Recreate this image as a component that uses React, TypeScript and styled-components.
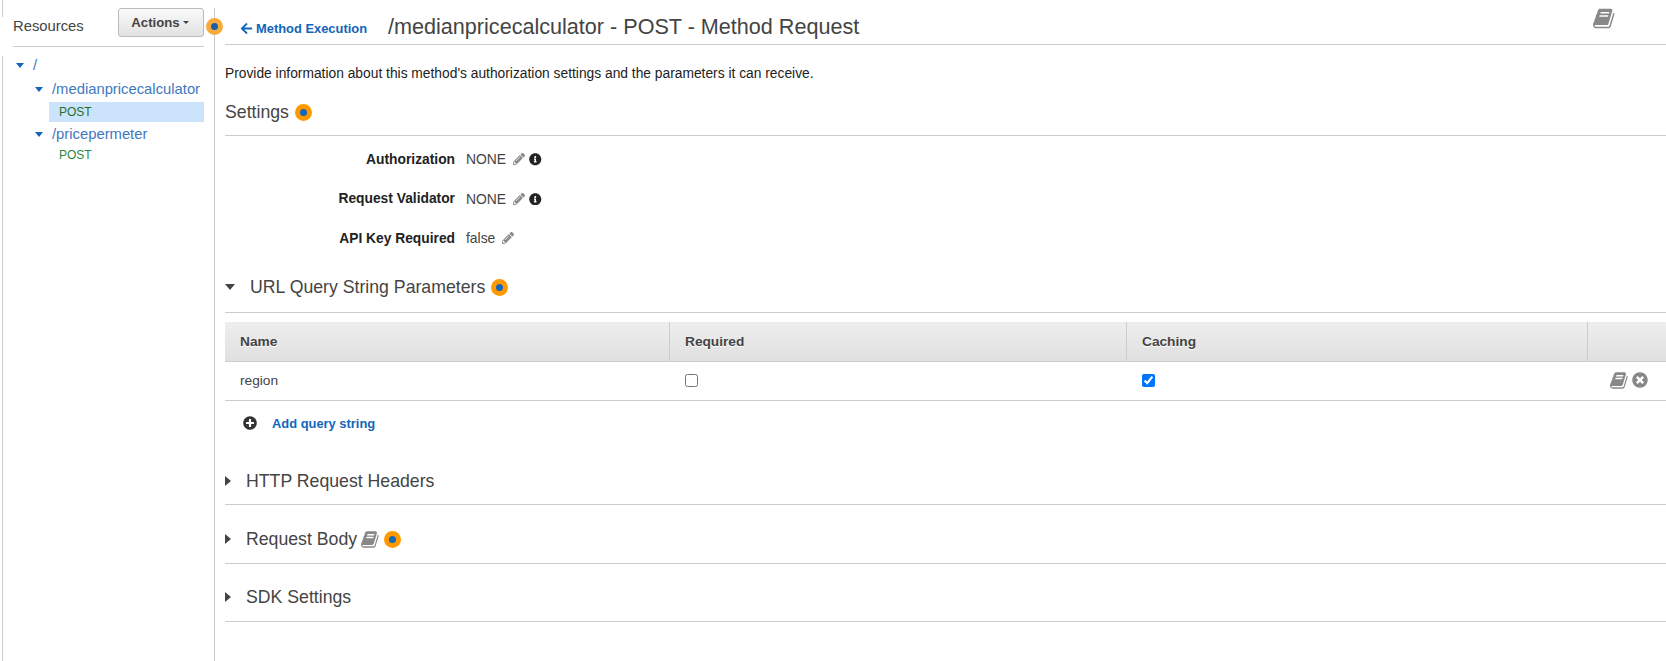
import { FC, Fragment } from 'react'
import styled, { createGlobalStyle } from 'styled-components'
import { FaArrowLeft, FaInfoCircle, FaPencilAlt, FaPlusCircle, FaTimesCircle } from 'react-icons/fa'

const GlobalStyle = createGlobalStyle`
	html, body {
		margin: 0;
		padding: 0;
		background: #fff;
		font-family: "Liberation Sans", Arial, sans-serif;
		color: #333;
	}
`

const Page = styled.div`
	display: flex;
	width: 1666px;
	height: 661px;
	overflow: hidden;
	position: relative;
`

const Rail = styled.div`
	width: 3px;
	display: flex;
	flex-direction: column;
	gap: 39px;
`

const RailPiece = styled.div<{ $height?: number }>`
	border-right: 1px solid #ccc;
	height: ${(p) => (p.$height ? `${p.$height}px` : 'auto')};
	flex: ${(p) => (p.$height ? '0 0 auto' : '1 1 auto')};
`

const Sidebar = styled.aside`
	position: relative;
	box-sizing: border-box;
	width: 212px;
	margin-top: 8px;
	padding: 0 10px;
	border-right: 1px solid #ccc;
`

const SidebarHead = styled.div`
	display: flex;
	justify-content: space-between;
	align-items: flex-start;
	height: 39px;
	box-sizing: border-box;
	border-bottom: 1px solid #ccc;
`

const SidebarTitle = styled.span`
	margin-top: 9px;
	font-size: 14.8px;
	line-height: 18px;
	color: #444;
`

const ActionsButton = styled.button`
	display: flex;
	align-items: center;
	justify-content: center;
	gap: 3px;
	width: 86px;
	height: 29px;
	padding: 0 2px 1px 0;
	box-sizing: border-box;
	border: 1px solid #bbb;
	border-radius: 3px;
	background: linear-gradient(#fafafa, #e2e2e2);
	font-family: inherit;
	font-size: 13.2px;
	font-weight: 700;
	color: #444;
`

const SmallCaret = styled.i`
	width: 0;
	height: 0;
	border-left: 3px solid transparent;
	border-right: 3px solid transparent;
	border-top: 3px solid #444;
`

const Dot = styled.span`
	display: inline-block;
	box-sizing: border-box;
	width: 17px;
	height: 17px;
	flex: none;
	border-radius: 50%;
	background: #1166bb;
	border: 5px solid #ff9900;
`

const RailDot = styled(Dot)`
	position: absolute;
	right: -9px;
	top: 10px;
	border-color: #f8aa3c;
	background: #1a5ea8;
`

const Tree = styled.ul`
	list-style: none;
	margin: 0;
	padding: 6px 0 0;
`

const TreeRow = styled.li<{ $depth: number }>`
	display: flex;
	align-items: center;
	height: 24px;
	padding-left: ${(p) => 3 + p.$depth * 19}px;
	font-size: 14.8px;
	color: #4078c0;
`

const TreeCaret = styled.i`
	width: 0;
	height: 0;
	margin-right: 9px;
	border-left: 4.5px solid transparent;
	border-right: 4.5px solid transparent;
	border-top: 5px solid #1166bb;
`

const MethodRow = styled.li<{ $active?: boolean }>`
	box-sizing: border-box;
	height: 20px;
	line-height: 20px;
	margin: ${(p) => (p.$active ? '1px 0 0 36px' : '-1px 0 0 36px')};
	padding-left: 10px;
	font-size: 12px;
	color: ${(p) => (p.$active ? '#23702c' : '#2e8540')};
	background: ${(p) => (p.$active ? '#cce4fb' : 'transparent')};
`

const Main = styled.main`
	flex: 1 1 auto;
	min-width: 0;
	padding-left: 10px;
`

const TitleBar = styled.header`
	display: flex;
	align-items: center;
	height: 45px;
	padding: 9px 0 0 15px;
	box-sizing: border-box;
	border-bottom: 1px solid #ccc;
	position: relative;
`

const BackLink = styled.a`
	display: inline-flex;
	align-items: center;
	gap: 3px;
	margin: 3px 21px 0 0;
	font-size: 12.9px;
	font-weight: 700;
	color: #1166bb;
`

const PageTitle = styled.h1`
	margin: 0;
	font-size: 21.6px;
	font-weight: 400;
	color: #444;
`

const TitleBook = styled.span`
	position: absolute;
	right: 52px;
	top: 7px;
`

const Description = styled.p`
	margin: 0;
	height: 27px;
	padding-top: 21px;
	font-size: 13.8px;
	line-height: 16px;
	color: #222;
`

const SectionHead = styled.div<{ $height: number; $pad?: number; $mt?: number }>`
	display: flex;
	align-items: center;
	gap: 6px;
	box-sizing: border-box;
	height: ${(p) => p.$height}px;
	margin-top: ${(p) => p.$mt ?? 0}px;
	padding-bottom: ${(p) => p.$pad ?? 0}px;
	border-bottom: 1px solid #ccc;
	font-size: 17.7px;
	color: #444;
`

const OpenCaret = styled.i`
	width: 0;
	height: 0;
	margin-right: 9px;
	border-left: 5px solid transparent;
	border-right: 5px solid transparent;
	border-top: 6px solid #444;
`

const ClosedCaret = styled.i`
	width: 0;
	height: 0;
	margin-right: 9px;
	border-top: 5px solid transparent;
	border-bottom: 5px solid transparent;
	border-left: 6px solid #444;
`

const SettingsList = styled.dl`
	display: grid;
	grid-template-columns: 230px auto;
	grid-auto-rows: 39.5px;
	align-items: center;
	justify-content: start;
	column-gap: 11px;
	margin: 3.5px 0 0;
`

const SettingLabel = styled.dt`
	text-align: right;
	font-size: 13.8px;
	font-weight: 700;
	color: #222;
`

const SettingValue = styled.dd`
	display: flex;
	align-items: center;
	gap: 7px;
	margin: 0;
	font-size: 13.9px;
	color: #444;
`

const Pencil = styled(FaPencilAlt)`
	font-size: 12px;
	color: #888;
	margin-right: -3px;
`

const Info = styled(FaInfoCircle)`
	font-size: 12.5px;
	color: #222;
`

const Table = styled.div`
	margin-top: 9px;
	display: grid;
	grid-template-columns: 445px 457px 461px 1fr;
	font-size: 13.7px;
`

const HeadCell = styled.div<{ $last?: boolean }>`
	box-sizing: border-box;
	height: 40px;
	display: flex;
	align-items: center;
	padding-left: 15px;
	font-weight: 700;
	color: #444;
	text-shadow: 0 1px 0 #fff;
	background: linear-gradient(#eeeeee, #e0e0e0);
	border-bottom: 1px solid #ccc;
	border-right: ${(p) => (p.$last ? 'none' : '1px solid #ccc')};
`

const BodyCell = styled.div<{ $end?: boolean }>`
	box-sizing: border-box;
	height: 39px;
	display: flex;
	align-items: center;
	justify-content: ${(p) => (p.$end ? 'flex-end' : 'flex-start')};
	gap: 5px;
	padding: ${(p) => (p.$end ? '0 18px 2px 0' : '0 0 2px 15px')};
	border-bottom: 1px solid #ccc;
	color: #444;
`

const Check = styled.input`
	margin: 0;
	width: 13px;
	height: 13px;
`

const AddRow = styled.div`
	display: flex;
	align-items: center;
	gap: 15px;
	height: 46px;
	padding: 0 0 2px 18px;
	box-sizing: border-box;
	font-size: 12.9px;
	font-weight: 700;
	color: #1166bb;
`

const AddIcon = styled(FaPlusCircle)`
	font-size: 14px;
	color: #333;
`

const RemoveIcon = styled(FaTimesCircle)`
	font-size: 16px;
	color: #888;
`

const BookSvg = styled.svg`
	flex: none;
	margin: 0 -2px;
	fill: #888;
`

const bookPath =
	'M1639 478q40 57 18 129l-275 906q-19 64-76.5 107.5t-122.5 43.5h-923q-77 0-148.5-53.5t-99.5-131.5q-24-67-2-127 0-4 3-27t4-37q1-8-3-21.5t-3-19.5q2-11 8-21t16.5-23.5 16.5-23.5q23-38 45-91.5t30-91.5q3-10 .5-30t-.5-28q3-11 17-28t17-23q21-36 42-92t25-90q1-9-2.5-32t.5-28q4-13 22-30.5t22-22.5q19-26 42.5-84.5t27.5-96.5q1-8-3-25.5t-2-26.5q2-8 9-18t18-23 17-21q8-12 16.5-30.5t15-35 16-36 19.5-32 26.5-23.5 36-11.5 47.5 5.5l-1 3q38-9 51-9h761q74 0 114 56t18 130l-274 906q-36 119-71.5 153.5t-128.5 34.5h-869q-27 0-38 15-11 16-1 43 24 70 144 70h923q29 0 56-15.5t35-41.5l300-987q7-22 5-57 38 15 59 43zm-1064 2q-4 13 2 22.5t20 9.5h608q13 0 25.5-9.5t16.5-22.5l21-64q4-13-2-22.5t-20-9.5h-608q-13 0-25.5 9.5t-16.5 22.5zm-83 256q-4 13 2 22.5t20 9.5h608q13 0 25.5-9.5t16.5-22.5l21-64q4-13-2-22.5t-20-9.5h-608q-13 0-25.5 9.5t-16.5 22.5z'

const Book: FC<{ size: number }> = ({ size }) => (
	<BookSvg width={size} height={size} viewBox='0 0 1792 1792'>
		<path d={bookPath} />
	</BookSvg>
)

const settings = [
	{ label: 'Authorization', value: 'NONE', info: true },
	{ label: 'Request Validator', value: 'NONE', info: true },
	{ label: 'API Key Required', value: 'false', info: false },
]

export default function App() {
	return (
		<Page>
			<GlobalStyle />
			<Rail>
				<RailPiece $height={17} />
				<RailPiece />
			</Rail>
			<Sidebar>
				<SidebarHead>
					<SidebarTitle>Resources</SidebarTitle>
					<ActionsButton>
						Actions
						<SmallCaret />
					</ActionsButton>
				</SidebarHead>
				<RailDot />
				<Tree>
					<TreeRow $depth={0}>
						<TreeCaret />/
					</TreeRow>
					<TreeRow $depth={1}>
						<TreeCaret />
						/medianpricecalculator
					</TreeRow>
					<MethodRow $active>POST</MethodRow>
					<TreeRow $depth={1}>
						<TreeCaret />
						/pricepermeter
					</TreeRow>
					<MethodRow>POST</MethodRow>
				</Tree>
			</Sidebar>
			<Main>
				<TitleBar>
					<BackLink>
						<FaArrowLeft size={13} />
						Method Execution
					</BackLink>
					<PageTitle>/medianpricecalculator - POST - Method Request</PageTitle>
					<TitleBook>
						<Book size={23} />
					</TitleBook>
				</TitleBar>
				<Description>
					Provide information about this method's authorization settings and the parameters it can receive.
				</Description>
				<SectionHead $height={43} $pad={3}>
					Settings <Dot />
				</SectionHead>
				<SettingsList>
					{settings.map((s) => (
						<Fragment key={s.label}>
							<SettingLabel>{s.label}</SettingLabel>
							<SettingValue>
								{s.value}
								<Pencil />
								{s.info && <Info />}
							</SettingValue>
						</Fragment>
					))}
				</SettingsList>
				<SectionHead $height={51} $mt={4}>
					<OpenCaret />
					<span>URL Query String Parameters</span>
					<Dot />
				</SectionHead>
				<Table>
					<HeadCell>Name</HeadCell>
					<HeadCell>Required</HeadCell>
					<HeadCell>Caching</HeadCell>
					<HeadCell $last />
					<BodyCell>region</BodyCell>
					<BodyCell>
						<Check type='checkbox' readOnly />
					</BodyCell>
					<BodyCell>
						<Check type='checkbox' checked readOnly />
					</BodyCell>
					<BodyCell $end>
						<Book size={19} />
						<RemoveIcon />
					</BodyCell>
				</Table>
				<AddRow>
					<AddIcon />
					Add query string
				</AddRow>
				<SectionHead $height={47} $mt={11}>
					<ClosedCaret />
					HTTP Request Headers
				</SectionHead>
				<SectionHead $height={49} $mt={10}>
					<ClosedCaret />
					Request Body <Book size={19} /> <Dot />
				</SectionHead>
				<SectionHead $height={49} $mt={9}>
					<ClosedCaret />
					SDK Settings
				</SectionHead>
			</Main>
		</Page>
	)
}
